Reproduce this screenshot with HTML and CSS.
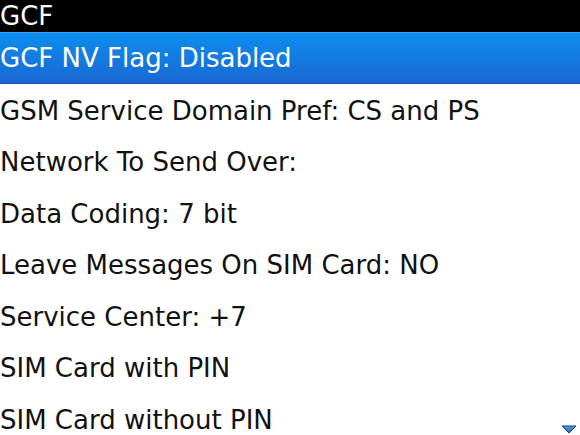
FILE: index.html
```html
<!DOCTYPE html>
<html lang="en">
<head>
    <meta charset="UTF-8">
    <title>GCF</title>
    <link rel="stylesheet" href="styles.css">
</head>
<body>
    <div class="title-bar">GCF</div>
    <ul class="menu">
        <li class="selected">GCF NV Flag: Disabled</li>
        <li>GSM Service Domain Pref: CS and PS</li>
        <li>Network To Send Over:</li>
        <li>Data Coding: 7 bit</li>
        <li>Leave Messages On SIM Card: NO</li>
        <li>Service Center: +7</li>
        <li>SIM Card with PIN</li>
        <li>SIM Card without PIN</li>
    </ul>
    <svg class="scroll-arrow" width="16" height="9" viewBox="0 0 16 9">
        <defs>
            <linearGradient id="arrow" x1="0" y1="0" x2="0" y2="1">
                <stop offset="0" stop-color="#5aa0e8"/>
                <stop offset="1" stop-color="#1f5fb8"/>
            </linearGradient>
        </defs>
        <path d="M1 1 H15 L8 8 Z" fill="url(#arrow)" stroke="#1c3c66" stroke-width="1" stroke-linejoin="round"/>
    </svg>
</body>
</html>
```

FILE: styles.css
```css
body {
    margin: 0;
    width: 580px;
    height: 435px;
    overflow: hidden;
    background: white;
    font-family: 'DejaVu Sans', sans-serif;
    font-size: 26px;
    color: #111;
    position: relative;
}
.title-bar {
    height: 32px;
    line-height: 32px;
    background: black;
    color: white;
}
.menu {
    list-style: none;
    margin: 0;
    padding: 0;
}
.menu li {
    height: 51.5px;
    line-height: 54px;
    white-space: nowrap;
    overflow: hidden;
}
.menu li.selected {
    color: white;
    background: linear-gradient(#0b8ef0, #1a68d2);
    border-top: 1px solid #3aa0f0;
    border-bottom: 1px solid #1450b0;
    height: 49.5px;
    line-height: 51px;
}
.scroll-arrow {
    position: absolute;
    right: 3px;
    bottom: 1px;
}
```
